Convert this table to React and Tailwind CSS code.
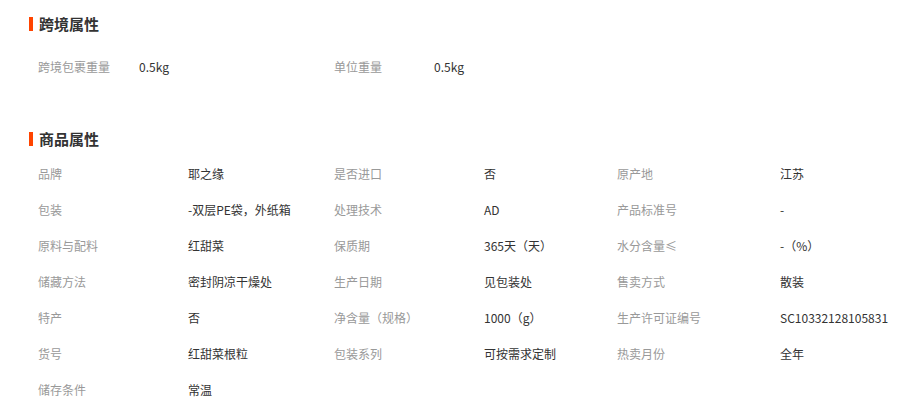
import React from 'react';

const crossBorder = [
  ['跨境包裹重量', '0.5kg'],
  ['单位重量', '0.5kg'],
];

const attrs = [
  ['品牌', '耶之缘', '是否进口', '否', '原产地', '江苏'],
  ['包装', '-双层PE袋，外纸箱', '处理技术', 'AD', '产品标准号', '-'],
  ['原料与配料', '红甜菜', '保质期', '365天（天）', '水分含量≤', '-（%）'],
  ['储藏方法', '密封阴凉干燥处', '生产日期', '见包装处', '售卖方式', '散装'],
  ['特产', '否', '净含量（规格）', '1000（g）', '生产许可证编号', 'SC10332128105831'],
  ['货号', '红甜菜根粒', '包装系列', '可按需求定制', '热卖月份', '全年'],
  ['储存条件', '常温'],
];

function SectionTitle({ children }) {
  return (
    <div className="flex items-center h-5">
      <span className="w-1 h-[14px] bg-[#ff4400]"></span>
      <span className="ml-[6px] text-[15px] font-bold text-[#333]">{children}</span>
    </div>
  );
}

export default function App() {
  return (
    <div
      className="w-[905px] h-[399px] bg-white pl-[29px] pt-[14px] overflow-hidden"
      style={{ fontFamily: '"Noto Sans CJK SC", sans-serif' }}
    >
      {/* 跨境属性 */}
      <SectionTitle>跨境属性</SectionTitle>
      <div className="grid grid-cols-[101px_195px_100px_1fr] h-9 items-center mt-[15px] pl-[9px] text-xs">
        {crossBorder.map(([k, v]) => (
          <React.Fragment key={k}>
            <span className="text-[#999]">{k}</span>
            <span className="text-[#333]">{v}</span>
          </React.Fragment>
        ))}
      </div>

      {/* 商品属性 */}
      <div className="mt-[44px]">
        <SectionTitle>商品属性</SectionTitle>
      </div>
      <div className="mt-[7px] pl-[9px] text-xs">
        {attrs.map((row, i) => (
          <div
            key={i}
            className="grid grid-cols-[150px_146px_150px_133px_163px_1fr] h-9 items-center"
          >
            {row.map((cell, j) => (
              <span key={j} className={j % 2 === 0 ? 'text-[#999]' : 'text-[#333]'}>
                {cell}
              </span>
            ))}
          </div>
        ))}
      </div>
    </div>
  );
}
